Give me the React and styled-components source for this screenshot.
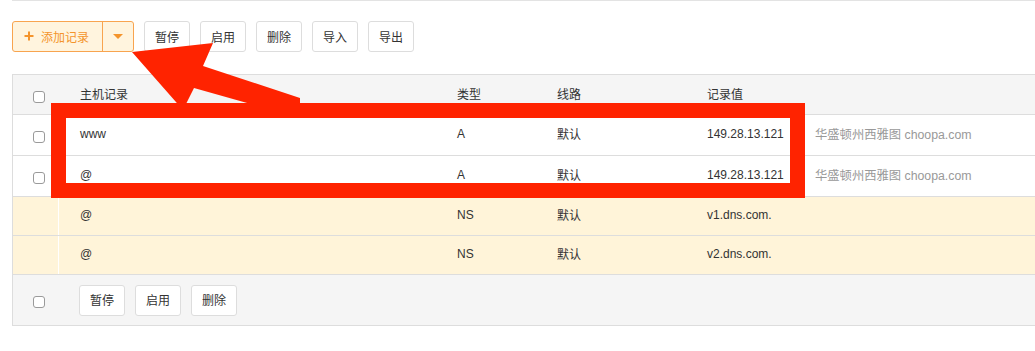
import styled, { createGlobalStyle } from "styled-components";

const GlobalStyle = createGlobalStyle`
  html, body {
    margin: 0;
    padding: 0;
    background: #ffffff;
    overflow: hidden;
  }
  body {
    font-family: "Liberation Sans", "Noto Sans CJK SC", sans-serif;
    font-size: 12px;
    color: #333333;
  }
`;

const Page = styled.div`
  position: relative;
  width: 1035px;
  height: 351px;
  overflow: hidden;
`;

const TopRule = styled.div`
  margin-left: 12px;
  border-top: 1px solid #e3e3e3;
`;

const Toolbar = styled.div`
  display: flex;
  gap: 10px;
  padding: 20px 0 0 12px;
`;

const Button = styled.button`
  box-sizing: border-box;
  width: 46px;
  height: 31px;
  padding: 0 0 1px;
  border: 1px solid #dddddd;
  border-radius: 3px;
  background: #ffffff;
  color: #333333;
  font-family: "Liberation Sans", "Noto Sans CJK SC", sans-serif;
  font-size: 12px;
  cursor: pointer;
`;

const SplitButton = styled.div`
  box-sizing: border-box;
  display: flex;
  width: 122px;
  height: 31px;
  border: 1px solid #f8a44f;
  border-radius: 3px;
  background: #fff4de;
  color: #f4942c;
  overflow: hidden;
`;

const SplitMain = styled.div`
  box-sizing: border-box;
  width: 90px;
  display: flex;
  align-items: center;
  padding: 0 0 1px 11px;
  gap: 7px;
  border-right: 1px solid #f8a44f;
  font-size: 12px;
`;

const SplitCaret = styled.div`
  flex: 1;
  display: flex;
  align-items: center;
  justify-content: center;
  &::after {
    content: "";
    border-left: 5px solid transparent;
    border-right: 5px solid transparent;
    border-top: 5px solid #f4942c;
  }
`;

const Table = styled.div`
  margin: 22px 0 0 12px;
  width: 1040px;
  border: 1px solid #dddddd;
`;

const tones = {
  head: { bg: "#f5f5f5", h: 39 },
  plain: { bg: "#ffffff", h: 40 },
  ns: { bg: "#fff4d9", h: 38 },
  foot: { bg: "#f5f5f5", h: 50 },
};

const Row = styled.div`
  display: grid;
  grid-template-columns: 46px 377px 100px 150px 108px 1fr;
  align-items: center;
  height: ${(p) => tones[p.$tone].h}px;
  background: ${(p) => tones[p.$tone].bg};
  border-bottom: 1px solid #dddddd;
  &:last-child {
    border-bottom: none;
  }
`;

const CheckCell = styled.div`
  box-sizing: border-box;
  height: 100%;
  display: flex;
  align-items: center;
  padding-left: 20px;
  border-right: 1px solid ${(p) => (p.$divider ? "#ffffff" : "transparent")};
`;

const Checkbox = styled.span`
  box-sizing: border-box;
  display: block;
  width: 12px;
  height: 12px;
  margin-top: 4px;
  border: 1px solid #9a9a9a;
  border-radius: 3px;
  background: #ffffff;
`;

const Cell = styled.div`
  padding: 0 0 3px 21px;
  white-space: nowrap;
  color: ${(p) => (p.$muted ? "#999999" : "#333333")};
  font-size: ${(p) => (p.$muted ? "12.3px" : "12px")};
`;

const FootActions = styled.div`
  grid-column: 2 / -1;
  display: flex;
  gap: 10px;
  padding-left: 20px;
`;

const Overlay = styled.svg`
  position: absolute;
  top: 0;
  left: 0;
  pointer-events: none;
`;

const records = [
  { host: "www", type: "A", line: "默认", value: "149.28.13.121", note: "华盛顿州西雅图 choopa.com", tone: "plain" },
  { host: "@", type: "A", line: "默认", value: "149.28.13.121", note: "华盛顿州西雅图 choopa.com", tone: "plain" },
  { host: "@", type: "NS", line: "默认", value: "v1.dns.com.", note: "", tone: "ns" },
  { host: "@", type: "NS", line: "默认", value: "v2.dns.com.", note: "", tone: "ns" },
];

function PlusIcon() {
  return (
    <svg width="10" height="10" viewBox="0 0 10 10">
      <path d="M5 0.5v9M0.5 5h9" stroke="#f4942c" strokeWidth="2" />
    </svg>
  );
}

export default function App() {
  return (
    <>
      <GlobalStyle />
      <Page>
        <TopRule />
        <Toolbar>
          <SplitButton>
            <SplitMain>
              <PlusIcon />
              <span>添加记录</span>
            </SplitMain>
            <SplitCaret />
          </SplitButton>
          <Button>暂停</Button>
          <Button>启用</Button>
          <Button>删除</Button>
          <Button>导入</Button>
          <Button>导出</Button>
        </Toolbar>
        <Table>
          <Row $tone="head">
            <CheckCell>
              <Checkbox />
            </CheckCell>
            <Cell>主机记录</Cell>
            <Cell>类型</Cell>
            <Cell>线路</Cell>
            <Cell>记录值</Cell>
            <Cell />
          </Row>
          {records.map((r, i) => (
            <Row key={i} $tone={r.tone}>
              <CheckCell $divider={r.tone === "ns"}>
                {r.tone === "plain" && <Checkbox />}
              </CheckCell>
              <Cell>{r.host}</Cell>
              <Cell>{r.type}</Cell>
              <Cell>{r.line}</Cell>
              <Cell>{r.value}</Cell>
              <Cell $muted>{r.note}</Cell>
            </Row>
          ))}
          <Row $tone="foot">
            <CheckCell>
              <Checkbox />
            </CheckCell>
            <FootActions>
              <Button>暂停</Button>
              <Button>启用</Button>
              <Button>删除</Button>
            </FootActions>
          </Row>
        </Table>
        {/* annotation drawn over the screenshot */}
        <Overlay width="1035" height="351" viewBox="0 0 1035 351">
          <polygon
            points="132,52 213,43 203,66 300,98 300,118 194,88 183,110"
            fill="#ff2300"
          />
          <rect
            x="58.5"
            y="110.5"
            width="739"
            height="80"
            fill="none"
            stroke="#ff2300"
            strokeWidth="15"
          />
        </Overlay>
      </Page>
    </>
  );
}
